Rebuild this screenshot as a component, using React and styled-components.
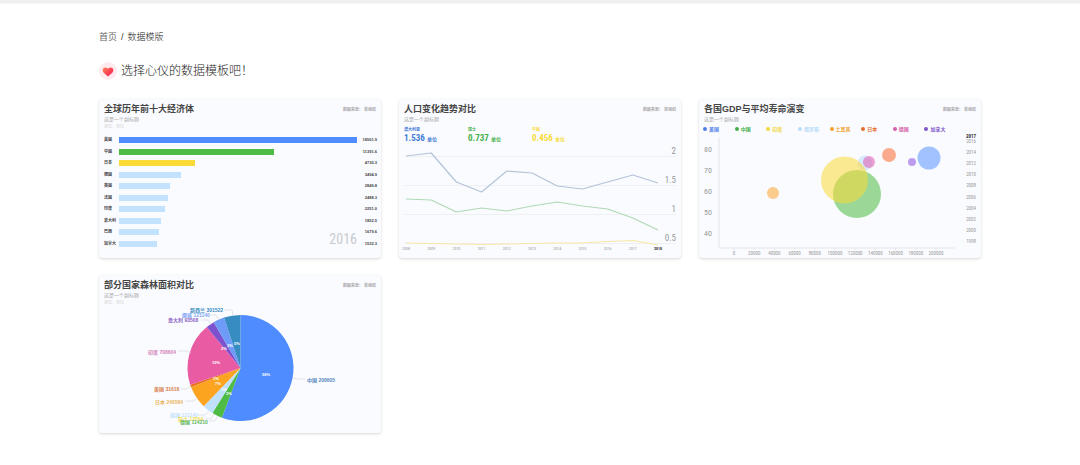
import React from 'react';
import styled, { createGlobalStyle } from 'styled-components';

const bars = [
  { name: '美国', value: '18561.9', width: 100, color: '#4e8cff' },
  { name: '中国', value: '11391.6', width: 65, color: '#4dbb44' },
  { name: '日本', value: '4730.3', width: 32, color: '#fadb37' },
  { name: '德国', value: '3494.9', width: 26 },
  { name: '英国', value: '2849.8', width: 21.5 },
  { name: '法国', value: '2488.3', width: 20.6 },
  { name: '印度', value: '2251.0', width: 19.5 },
  { name: '意大利', value: '1852.5', width: 17.5 },
  { name: '巴西', value: '1679.6', width: 16.7 },
  { name: '加拿大', value: '1532.3', width: 16 },
];

const stats = [
  { name: '澳大利亚', value: '1.536', color: '#3f7bd6' },
  { name: '瑞士', value: '0.737', color: '#46b04a' },
  { name: '中国', value: '0.456', color: '#f7dc3c' },
];

const lines = [
  { color: '#b3c3d8', y: [11, 8, 37, 47, 26, 28, 41, 44, 37, 30, 38] },
  { color: '#b0d9b5', y: [54, 55, 67, 63, 66, 61, 57, 61, 64, 73, 85] },
  { color: '#f7e7a6', y: [98, 98.5, 99, 99.5, 99, 98.5, 98, 98, 96.5, 95.5, 100] },
];

const legend = [
  { name: '美国', color: '#4e80e8' },
  { name: '中国', color: '#46b04a' },
  { name: '印度', color: '#f0d840' },
  { name: '俄罗斯', color: '#b9dcfa' },
  { name: '土耳其', color: '#f0a030' },
  { name: '日本', color: '#e2702c' },
  { name: '德国', color: '#d860a8' },
  { name: '加拿大', color: '#8058cc' },
];

const bubbles = [
  { x: 74, y: 59, r: 6, color: '#faa62f' },
  { x: 158, y: 60, r: 24, color: '#4dbb44' },
  { x: 166, y: 29, r: 7.5, color: '#b9dcfa' },
  { x: 145.5, y: 46, r: 23.5, color: '#fadb37' },
  { x: 170, y: 28, r: 6, color: '#e055ae' },
  { x: 190, y: 21, r: 7, color: '#fb6a30' },
  { x: 213, y: 28, r: 4, color: '#8a4fe0' },
  { x: 230, y: 24, r: 11.5, color: '#5a92ff' },
];

const slices = [
  { to: 200.5, color: '#4e8cff', text: '58%', tx: 167, ty: 69 },
  { to: 212, color: '#4dbb44', text: '3%', tx: 130, ty: 88 },
  { to: 224, color: '#bfe1fd', text: '3%', tx: 125, ty: 84 },
  { to: 249, color: '#fca420', text: '7%', tx: 119, ty: 78 },
  { to: 251.7, color: '#e8701c', text: '1%', tx: 117, ty: 73 },
  { to: 320.5, color: '#e95ba3', text: '19%', tx: 117, ty: 57 },
  { to: 329.7, color: '#7c52cf', text: '2%', tx: 125, ty: 43 },
  { to: 341.9, color: '#6f9bf8', text: '3%', tx: 131, ty: 40 },
  { to: 360, color: '#378cc2', text: '5%', tx: 138, ty: 38 },
];

const callouts = [
  { text: '中国 208605', x: 208, y: 75, color: '#5b8bc0', line: '194,73 198,74 206,74' },
  { text: '新西兰 301522', x: 91, y: 5, color: '#378cc2', line: '125,5 133,5 134,11' },
  { text: '挪威 121140', x: 83, y: 10, color: '#7ea6f2', line: '112,10 117,10 120,15' },
  { text: '意大利 93508', x: 69, y: 15, color: '#8c62c4', line: '102,15 109,15 112,20' },
  { text: '印度 708604', x: 49, y: 47, color: '#d284b8', line: '79,46 88,46 92,48' },
  { text: '美国 31618', x: 55, y: 84, color: '#d9814e', line: '82,84 87,84 92,81' },
  { text: '日本 240584', x: 56, y: 97, color: '#eab560', line: '86,96 95,96 98,92' },
  { text: '韩国 121140', x: 71, y: 110, color: '#c4e2fa', line: '99,110 106,110 110,106' },
  { text: '瑞士 12554', x: 79, y: 114, color: '#f0dc50', line: '106,114 112,114 115,109' },
  { text: '德国 114210', x: 81, y: 117, color: '#5cb860', line: '110,116 116,116 119,111' },
];

const PIE = { cx: 141.5, cy: 63, r: 53 };

const pointAt = (deg) => {
  const a = (deg * Math.PI) / 180;
  return `${PIE.cx + PIE.r * Math.sin(a)} ${PIE.cy - PIE.r * Math.cos(a)}`;
};

const slicePath = (from, to) =>
  `M${PIE.cx} ${PIE.cy} L${pointAt(from)} A${PIE.r} ${PIE.r} 0 ${to - from > 180 ? 1 : 0} 1 ${pointAt(to)} Z`;

const TemplateCard = ({ title, children }) => (
  <Card>
    <CardHeader>
      <div>
        <CardTitle>{title}</CardTitle>
        <Subtitle>这是一个副标题</Subtitle>
      </div>
      <Source>数据来源： 某组织</Source>
    </CardHeader>
    {children}
  </Card>
);

const BarChart = () => (
  <>
    <Unit>单位：单位</Unit>
    <BarList>
      {bars.map((bar) => (
        <BarRow key={bar.name}>
          <BarName>{bar.name}</BarName>
          <BarTrack>
            <BarFill color={bar.color} style={{ width: `${bar.width}%` }} />
          </BarTrack>
          <BarValue>{bar.value}</BarValue>
        </BarRow>
      ))}
      <BigYear>2016</BigYear>
    </BarList>
  </>
);

const LineChart = () => (
  <>
    <Stats>
      {stats.map((stat) => (
        <Stat key={stat.name} $color={stat.color}>
          <StatName>{stat.name}</StatName>
          <StatValue>
            {stat.value} <small>单位</small>
          </StatValue>
        </Stat>
      ))}
    </Stats>
    <Chart viewBox="0 0 282 113">
      {['2', '1.5', '1', '0.5'].map((label, i) => (
        <g key={label}>
          <line x1="5" x2="277" y1={11.5 + i * 29} y2={11.5 + i * 29} stroke="#eff0f4" />
          <AxisText x="277" y={9 + i * 29} $size={9} $anchor="end">{label}</AxisText>
        </g>
      ))}
      {lines.map((line) => (
        <polyline
          key={line.color}
          points={line.y.map((y, i) => `${7 + i * 25.2},${y}`).join(' ')}
          fill="none"
          stroke={line.color}
          strokeWidth="1.2"
          strokeLinejoin="round"
        />
      ))}
      {lines[0].y.map((_, i) => (
        <AxisText key={i} x={7 + i * 25.2} y="105" $size={4} $anchor="middle" $strong={i === 10}>
          {2008 + i}
        </AxisText>
      ))}
    </Chart>
  </>
);

const BubbleChart = () => (
  <>
    <Legend>
      {legend.map((item) => (
        <LegendItem key={item.name} $color={item.color}>{item.name}</LegendItem>
      ))}
    </Legend>
    <Chart viewBox="0 0 282 123">
      <path d="M20 3V114H256" fill="none" stroke="#e3e5ea" />
      {[80, 70, 60, 50, 40].map((label, i) => (
        <AxisText key={label} x="5" y={18 + i * 21} $size={8}>{label}</AxisText>
      ))}
      {Array.from({ length: 11 }, (_, i) => (
        <g key={i}>
          <line x1={35 + i * 20.2} x2={35 + i * 20.2} y1="114" y2="116" stroke="#e3e5ea" />
          <AxisText x={35 + i * 20.2} y="121" $size={5} $anchor="middle">{i * 20000}</AxisText>
        </g>
      ))}
      {bubbles.map((b) => (
        <circle key={b.x} cx={b.x} cy={b.y} r={b.r} fill={b.color} opacity="0.55" />
      ))}
      <AxisText x="277" y="4" $size={5} $anchor="end" $strong>2017</AxisText>
      {Array.from({ length: 10 }, (_, i) => (
        <AxisText key={i} x="277" y={9 + i * 11.1} $size={5} $anchor="end">{2016 - i * 2}</AxisText>
      ))}
    </Chart>
  </>
);

const PieChart = () => (
  <>
    <Unit>单位：单位</Unit>
    <Chart viewBox="0 0 282 128">
      {slices.map((slice, i) => (
        <path key={slice.to} d={slicePath(i ? slices[i - 1].to : 0, slice.to)} fill={slice.color} />
      ))}
      {slices.map((slice) => (
        <PieText key={slice.to} x={slice.tx} y={slice.ty + 2}>{slice.text}</PieText>
      ))}
      {callouts.map((c) => (
        <g key={c.text}>
          <polyline points={c.line} fill="none" stroke="#cfd3d8" strokeWidth="0.6" />
          <CalloutText x={c.x} y={c.y + 2} fill={c.color}>{c.text}</CalloutText>
        </g>
      ))}
    </Chart>
  </>
);

const HeartIcon = () => (
  <Heart viewBox="0 0 18 18" aria-hidden="true">
    <defs>
      <linearGradient id="heart" x1="0" y1="0" x2="1" y2="1">
        <stop offset="0" stopColor="#ff8a5c" />
        <stop offset="0.5" stopColor="#fb4552" />
        <stop offset="1" stopColor="#f4285a" />
      </linearGradient>
    </defs>
    <circle cx="9" cy="9" r="9" fill="#ffebef" />
    <path
      d="M9 14.6 4.7 10.7C3.4 9.4 3.3 7.500 4.400 6.300 5.700 5.100 7.700 5.200 9 6.700 10.300 5.200 12.300 5.100 13.600 6.300 14.700 7.500 14.600 9.400 13.300 10.700Z"
      fill="url(#heart)"
    />
  </Heart>
);

const App = () => {
  return (
    <>
      <GlobalStyle />
      <TopBar />
      <Page>
        <Breadcrumb aria-label="breadcrumb">
          <a href="#home">首页</a>
          <span>/</span>
          <strong>数据模版</strong>
        </Breadcrumb>
        <Heading>
          <HeartIcon />
          选择心仪的数据模板吧！
        </Heading>
        <Grid>
          <TemplateCard title="全球历年前十大经济体">
            <BarChart />
          </TemplateCard>
          <TemplateCard title="人口变化趋势对比">
            <LineChart />
          </TemplateCard>
          <TemplateCard title="各国GDP与平均寿命演变">
            <BubbleChart />
          </TemplateCard>
          <TemplateCard title="部分国家森林面积对比">
            <PieChart />
          </TemplateCard>
        </Grid>
      </Page>
    </>
  );
};

const GlobalStyle = createGlobalStyle`
  * {
    box-sizing: border-box;
  }

  body {
    margin: 0;
    background: #fff;
    color: #333;
    font-family: "Liberation Sans", "Noto Sans CJK SC", sans-serif;
  }
`;

const TopBar = styled.header`
  height: 3px;
  background: #f0f0f0;
  box-shadow: 0 1px 1px rgba(0, 0, 0, 0.04);
`;

const Page = styled.main`
  padding: 27px 99px 31px;
`;

const Breadcrumb = styled.nav`
  display: flex;
  gap: 4px;
  font-size: 9px;
  line-height: 14px;

  a {
    color: #666;
    text-decoration: none;
  }

  strong {
    color: #222;
    font-weight: 300;
  }
`;

const Heading = styled.h1`
  display: flex;
  align-items: center;
  gap: 4px;
  margin: 18px 0 19px;
  font-size: 12px;
  font-weight: 300;
  line-height: 18px;
  color: #222;
`;

const Heart = styled.svg`
  width: 18px;
  height: 18px;
`;

const Grid = styled.div`
  display: grid;
  grid-template-columns: repeat(3, 1fr);
  gap: 17px 18px;
`;

const Card = styled.article`
  display: flex;
  flex-direction: column;
  background: #fafbff;
  border-radius: 3px;
  box-shadow: 0 1px 3px rgba(0, 0, 0, 0.16);
`;

const CardHeader = styled.div`
  display: flex;
  justify-content: space-between;
  padding: 5px 5px 2px;
`;

const CardTitle = styled.h2`
  margin: 0 0 1px;
  font-size: 9px;
  font-weight: 700;
  line-height: 11px;
  color: #454545;
`;

const Subtitle = styled.p`
  margin: 0;
  font-size: 5px;
  line-height: 6px;
  color: #a8a8a8;
`;

const Source = styled.span`
  margin-top: 3px;
  font-size: 4px;
  font-weight: 700;
  line-height: 6px;
  color: #aaa;
`;

const Unit = styled.p`
  margin: 1px 5px 0;
  font-size: 4px;
  line-height: 4px;
  color: #d4d4d4;
`;

const BarList = styled.div`
  position: relative;
  display: flex;
  flex-direction: column;
  justify-content: space-between;
  height: 110px;
  margin: 8px 4px 10px 5px;
`;

const BarRow = styled.div`
  display: grid;
  grid-template-columns: 15px 1fr 20px;
  align-items: center;
  font-size: 4px;
  font-weight: 700;
  line-height: 6px;
  color: #444;
`;

const BarName = styled.span`
  white-space: nowrap;
`;

const BarTrack = styled.div`
  height: 6px;
`;

const BarFill = styled.div`
  height: 6px;
  background: ${props => props.color || '#c2e2fd'};
`;

const BarValue = styled.span`
  text-align: right;
`;

const BigYear = styled.span`
  position: absolute;
  right: 20px;
  bottom: 0;
  font-family: "Roboto Condensed", "Roboto", sans-serif;
  font-size: 14px;
  line-height: 15px;
  color: #c9cbcf;
`;

const Stats = styled.div`
  display: flex;
  margin: 3px 5px 0;
`;

const Stat = styled.div`
  width: 64px;
  color: ${props => props.$color};
  font-weight: 700;
`;

const StatName = styled.div`
  font-size: 4px;
  line-height: 6px;
`;

const StatValue = styled.div`
  font-family: "Roboto Condensed", "Roboto", "Noto Sans CJK SC", sans-serif;
  font-size: 9px;
  line-height: 11px;

  small {
    font-size: 5px;
  }
`;

const Chart = styled.svg`
  display: block;
  width: 100%;
  height: auto;
  overflow: visible;
`;

const AxisText = styled.text`
  font-family: "Roboto Condensed", "Roboto", sans-serif;
  font-size: ${props => props.$size}px;
  font-weight: ${props => (props.$strong ? 700 : 400)};
  fill: ${props => (props.$strong ? '#333' : '#999')};
  text-anchor: ${props => props.$anchor || 'start'};
`;

const PieText = styled.text`
  font-size: 4px;
  font-weight: 700;
  fill: #fff;
  text-anchor: middle;
`;

const CalloutText = styled.text`
  font-size: 5px;
  font-weight: 700;
`;

const Legend = styled.div`
  display: grid;
  grid-template-columns: repeat(8, 1fr);
  padding: 1px 25px 1px 4px;
`;

const LegendItem = styled.span`
  display: flex;
  align-items: center;
  gap: 2px;
  font-size: 5px;
  font-weight: 700;
  line-height: 8px;
  color: ${props => props.$color};

  &::before {
    content: '';
    width: 4px;
    height: 4px;
    border-radius: 50%;
    background: ${props => props.$color};
  }
`;

export default App;
